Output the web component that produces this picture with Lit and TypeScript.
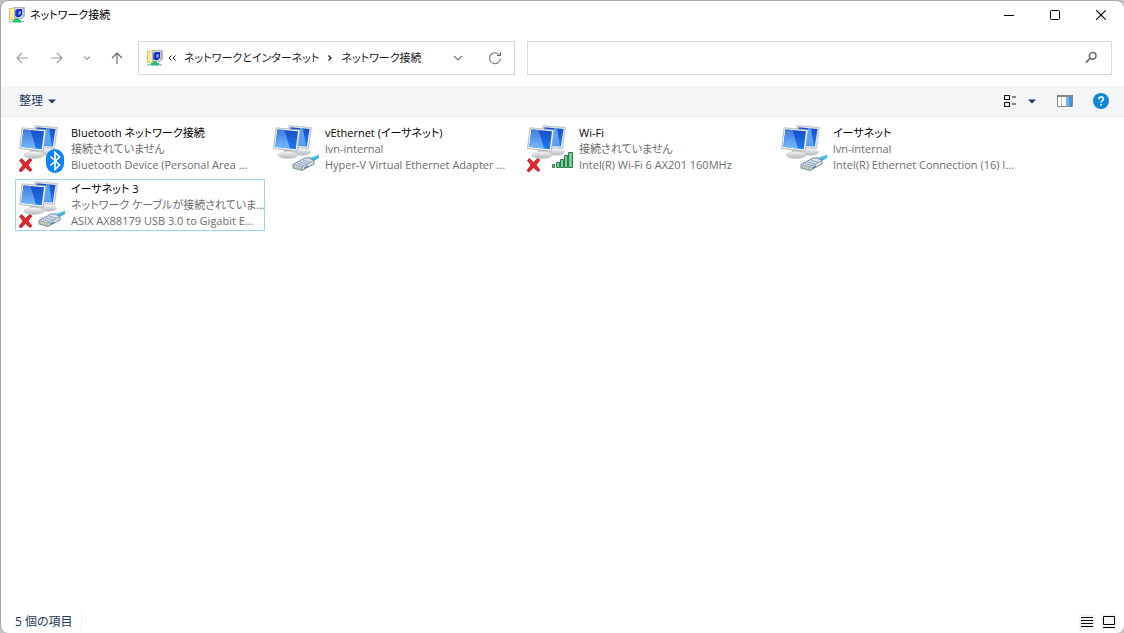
import { LitElement, html, css, svg, nothing } from "lit";
import { customElement, property, state } from "lit/decorators.js";
import { classMap } from "lit/directives/class-map.js";

type Badge = "bluetooth" | "cable" | "signal";

interface Connection {
  name: string;
  status: string;
  device: string;
  badge: Badge;
  disconnected: boolean;
}

const connections: Connection[] = [
  { name: "Bluetooth ネットワーク接続", status: "接続されていません", device: "Bluetooth Device (Personal Area ...", badge: "bluetooth", disconnected: true },
  { name: "vEthernet (イーサネット)", status: "lvn-internal", device: "Hyper-V Virtual Ethernet Adapter ...", badge: "cable", disconnected: false },
  { name: "Wi-Fi", status: "接続されていません", device: "Intel(R) Wi-Fi 6 AX201 160MHz", badge: "signal", disconnected: true },
  { name: "イーサネット", status: "lvn-internal", device: "Intel(R) Ethernet Connection (16) I...", badge: "cable", disconnected: false },
  { name: "イーサネット 3", status: "ネットワーク ケーブルが接続されていま...", device: "ASIX AX88179 USB 3.0 to Gigabit E...", badge: "cable", disconnected: true },
];

const controls = css`
  button {
    font: inherit;
    font-feature-settings: inherit;
    color: inherit;
    background: none;
    border: 0;
    margin: 0;
    padding: 0;
    display: flex;
    align-items: center;
    justify-content: center;
  }
  svg {
    display: block;
    flex: none;
  }
`;

const folderIcon = svg`<svg width="16" height="16" viewBox="0 0 16 16" aria-hidden="true">
  <path d="M.5 1.500h3l1-1h4v12h-8z" fill="#fbeb9c" stroke="#dcc25c"/>
  <path d="M5.500.8 15.600.3v8.700L13 11.700 5.500 11.300z" fill="#d3dae3" stroke="#97a3b2" stroke-width=".7"/>
  <path d="M13.500.8h2v8l-2 2z" fill="#aab6c4"/>
  <path d="M6 3.500 8.500 2.500v8L6 9z" fill="#4561c9"/>
  <path d="M7.500 2.200 13 2v5.500L11 10H7.500z" fill="#1524b4"/>
  <path d="M9 4.500 12 4v3L9.500 8.500z" fill="#6e9bfa"/>
  <path d="M6 11.500h4v1.500h2V15.600H4V13h2z" fill="#18c27b"/>
  <path d="M0 14h4v1.400H0zM12 14h3v1.400h-3z" fill="#b5babd"/>
</svg>`;

const badgeArt: Record<Badge, unknown> = {
  bluetooth: svg`
    <rect x="28" y="24" width="18" height="24" rx="9" fill="#0a84f7"/>
    <path d="m32.500 31.500 9 8.500-4.500 4.500v-17l4.500 4.500-9 8.500" fill="none" stroke="#fff" stroke-width="1.700"/>`,
  cable: svg`
    <path d="m37 33 10-3.500v3.500l-7 4z" fill="#3db4e6"/>
    <path d="m36 34 11-4.500" stroke="#b5e6f8" stroke-width="1.200"/>
    <path d="m21 39.500 12-6.500 4-.3 5 2.800v3.500l-12 6.500-9-2.500z" fill="#d5dfe8" stroke="#587590" stroke-width=".8"/>
    <path d="m21 39.500 9 2.500 12-6.500M30 42v3.500" fill="none" stroke="#6b8aa5" stroke-width=".7"/>
    <path d="m25 38.500 7 2M28 37l7 2M31 35.300l7 2" stroke="#7f9bb2" stroke-width=".8"/>
    <path d="M22.500 41v2m2-1.500v2m2-1.500v2m2-1.500v2" stroke="#b8a84e" stroke-width=".9"/>
    <path d="m32 42.500 4-2.200v1.700l-4 2z" fill="#647f9c"/>`,
  signal: svg`
    <g stroke="#2a7f48" stroke-width="1" fill="#7ccb98">
      <path d="M26.500 39.500h2v3h-2zM30.500 37.500h3v5h-3zM34.500 34.500h3v8h-3zM38.500 30.500h3v12h-3zM42.500 27.500h4v15h-4z"/>
    </g>`,
};

@customElement("connection-icon")
export class ConnectionIcon extends LitElement {
  @property() badge: Badge = "cable";
  @property({ type: Boolean }) disconnected = false;

  static styles = css`
    :host { display: block; flex: none; }
    svg { display: block; }
  `;

  render() {
    return html`<svg width="49" height="48" viewBox="0 0 49 48" aria-hidden="true">
      <defs>
        <linearGradient id="screen" x1="0" y1="0" x2="0" y2="1">
          <stop offset="0" stop-color="#1a4cc4"/><stop offset="1" stop-color="#1c7cf4"/>
        </linearGradient>
        <linearGradient id="shine" x1="0" y1="0" x2="0" y2="1">
          <stop offset="0" stop-color="#3f78dc"/><stop offset="1" stop-color="#74bbfc"/>
        </linearGradient>
        <linearGradient id="base" x1="0" y1="0" x2="0" y2="1">
          <stop offset="0" stop-color="#f5f6f7"/><stop offset="1" stop-color="#b2b6b9"/>
        </linearGradient>
      </defs>
      <ellipse cx="30" cy="27" rx="9" ry="3.500" fill="url(#base)"/>
      <path d="M17 .6 39.400 2.500 36.500 23.500 15 22z" fill="#e3e6e9" stroke="#aab0b5" stroke-width=".7"/>
      <path d="M18.500 2.200 37.500 3.900 34.800 21.500 17 20z" fill="url(#screen)"/>
      <path d="M28 3 31 3.300 34 21.200 26 20z" fill="#5ba2f6"/>
      <path d="m12 24 9 1v4h-9z" fill="#c0c4c7"/>
      <ellipse cx="16" cy="30" rx="10" ry="3.600" fill="url(#base)" stroke="#c4c8ca" stroke-width=".5"/>
      <path d="M4 2.800 28 5 25.300 26.300 1.500 23.500z" fill="#eceff1" stroke="#9fa7ae" stroke-width=".7"/>
      <path d="M5.500 4.500 26 6.300 23.700 24.300 3.300 21.800z" fill="url(#screen)"/>
      <path d="M5.500 4.500 12.500 5.100 18 23.600 3.300 21.800z" fill="url(#shine)"/>
      ${badgeArt[this.badge]}
      ${this.disconnected
        ? svg`<path d="M1.500 35.500 3.500 33.500 7.500 37.500 11.500 33.500 14 35 10 40 14 45 12 46.500 7.500 42.500 3 47 1 45.500 5 40z" fill="#e3262e" stroke="#b8121c" stroke-width=".7"/>`
        : nothing}
    </svg>`;
  }
}

@customElement("connection-tile")
export class ConnectionTile extends LitElement {
  @property({ attribute: false }) connection!: Connection;
  @property({ type: Boolean }) selected = false;

  static styles = [controls, css`
    :host { display: block; min-width: 0; }
    .tile {
      width: 100%;
      height: 52px;
      padding: 0 2px;
      border: 1px solid transparent;
      justify-content: flex-start;
      gap: 4px;
      text-align: left;
    }
    .tile.selected { border-color: #99d1ff; }
    .text { min-width: 0; line-height: 16px; color: #6d6d6d; }
    .line { display: block; white-space: nowrap; }
    .name { color: #000; }
  `];

  render() {
    const c = this.connection;
    return html`<button class=${classMap({ tile: true, selected: this.selected })}>
      <connection-icon .badge=${c.badge} ?disconnected=${c.disconnected}></connection-icon>
      <span class="text">
        <span class="line name">${c.name}</span>
        <span class="line">${c.status}</span>
        <span class="line">${c.device}</span>
      </span>
    </button>`;
  }
}

@customElement("app-root")
export class AppRoot extends LitElement {
  @state() private selected = 4;

  static styles = [controls, css`
    :host {
      display: block;
      height: 100vh;
      background: #c4c4c4;
      font-family: "Open Sans", "Noto Sans CJK JP", sans-serif;
      font-size: 11px;
      line-height: 16px;
      font-kerning: normal;
      font-feature-settings: "palt", "kern";
      color: #1a1a1a;
    }
    .window {
      box-sizing: border-box;
      height: 100%;
      display: flex;
      flex-direction: column;
      background: #fff;
      border: 1px solid #a8a8a8;
      border-right: 0;
      border-bottom: 0;
      border-radius: 8px;
      overflow: hidden;
    }
    .titlebar { display: flex; align-items: center; height: 28px; padding-left: 8px; }
    .title { flex: 1; margin: 0 0 0 5px; font-size: 11px; font-weight: 400; color: #000; }
    .caption { width: 46px; height: 28px; }
    .navbar { display: flex; align-items: center; height: 57px; padding: 0 12px 0 9px; }
    .arrows { display: flex; align-items: center; color: #9a9a9a; gap: 11px; margin-right: 9px; }
    .arrow { width: 24px; height: 24px; }
    .recent { width: 14px; height: 24px; }
    .up { color: #606060; }
    .address, .search {
      box-sizing: border-box;
      height: 34px;
      display: flex;
      align-items: center;
      border: 1px solid #d9d9d9;
      background: #fff;
      min-width: 0;
    }
    .address { flex: 19 1 0; padding: 0 6px 0 8px; margin-right: 12px; }
    .search { flex: 30 1 0; padding-right: 13px; }
    .crumbs { flex: 1; display: flex; align-items: center; gap: 8px; margin-left: 5px; white-space: nowrap; }
    .tool { width: 26px; height: 26px; color: #707070; }
    .address-tools { display: flex; gap: 11px; }
    .field { flex: 1; min-width: 0; height: 30px; border: 0; outline: 0; padding: 0 8px; font: inherit; background: none; }
    .toolbar {
      display: flex;
      align-items: center;
      justify-content: space-between;
      height: 30px;
      padding: 0 15px 0 18px;
      background: #f4f5f7;
      border-bottom: 1px solid #e8e9eb;
      font-size: 12px;
      color: #1e395b;
    }
    .organize { gap: 5px; }
    .views { display: flex; align-items: center; }
    .view { gap: 12px; margin-right: 21px; }
    .pane { margin-right: 20px; }
    .list {
      flex: 1;
      display: grid;
      grid-template-columns: repeat(auto-fill, 250px);
      align-content: start;
      gap: 4px;
      list-style: none;
      margin: 0;
      padding: 6px 14px;
    }
    .statusbar { display: flex; align-items: center; height: 22px; padding: 0 7px 0 14px; font-size: 12px; color: #1e395b; }
    .count { flex: 1; }
    .count span { padding-right: 8px; border-right: 1px solid #f0f0f0; }
    .mode { width: 16px; height: 16px; background: #f5f5f5; margin-left: 6px; }
  `];

  render() {
    const stroke = (size: number, d: string, width = 1.1) => svg`<svg width=${size} height=${size} viewBox=${`0 0 ${size} ${size}`} fill="none" stroke="currentColor" stroke-width=${width} aria-hidden="true"><path d=${d}/></svg>`;
    const caret = svg`<svg width="8" height="5" viewBox="0 0 8 5" aria-hidden="true"><path d="M0 .5h8L4 4.500z" fill="#1e395b"/></svg>`;
    return html`<div class="window">
      <header class="titlebar">
        ${folderIcon}
        <h1 class="title">ネットワーク接続</h1>
        <button class="caption" aria-label="最小化"><svg width="10" height="10" viewBox="0 0 10 10"><path d="M0 5.500h10" stroke="#000"/></svg></button>
        <button class="caption" aria-label="最大化"><svg width="10" height="10" viewBox="0 0 10 10"><rect x=".5" y=".5" width="9" height="9" rx="1" fill="none" stroke="#000"/></svg></button>
        <button class="caption" aria-label="閉じる"><svg width="10" height="10" viewBox="0 0 10 10"><path d="m0 0 10 10M10 0 0 10" stroke="#000" stroke-width="1.100"/></svg></button>
      </header>

      <nav class="navbar">
        <div class="arrows">
          <button class="arrow" aria-label="戻る">${stroke(12, "M12 6H1M6 1 1 6l5 5")}</button>
          <button class="arrow" aria-label="進む">${stroke(12, "M0 6h11M6 1l5 5-5 5")}</button>
          <button class="recent" aria-label="履歴">${stroke(8, "m1 2.500 3 3 3-3")}</button>
          <button class="arrow up" aria-label="上へ">${stroke(12, "M6 12V1M1 6l5-5 5 5")}</button>
        </div>
        <div class="address">
          ${folderIcon}
          <div class="crumbs">
            <button aria-label="上位の場所">${stroke(8, "M3.500 1.500 1 4l2.500 2.500M7.500 1.500 5 4l2.500 2.500", 1)}</button>
            <button>ネットワークとインターネット</button>
            ${stroke(6, "m1.500 .5 2.500 2.500-2.500 2.500", 1.2)}
            <button>ネットワーク接続</button>
          </div>
          <div class="address-tools">
            <button class="tool" aria-label="以前の場所">${stroke(10, "m1 3 4 4 4-4")}</button>
            <button class="tool" aria-label="更新">${stroke(14, "M12.500 7.500A5.500 5.500 0 1 1 11.500 4M12.500 1v3.500H9")}</button>
          </div>
        </div>
        <div class="search">
          <input class="field" type="search" aria-label="検索">
          ${svg`<svg width="13" height="13" viewBox="0 0 13 13" fill="none" stroke="#707070" aria-hidden="true"><circle cx="7.700" cy="4.800" r="3.300" stroke-width="1.600"/><path d="m5.300 7.200-4.300 4.300" stroke-width="1.800"/></svg>`}
        </div>
      </nav>

      <div class="toolbar">
        <button class="organize">整理 ${caret}</button>
        <div class="views">
          <button class="view" aria-label="表示方法">
            <svg width="12" height="12" viewBox="0 0 12 12" fill="none" stroke="#1a1a1a" stroke-width="1.200"><path d="M.5.5h5v4h-5zM.5 7.500h5v4h-5zM8 2h4M8 9h4"/></svg>
            ${caret}
          </button>
          <button class="pane" aria-label="プレビュー">
            <svg width="16" height="12" viewBox="0 0 16 12"><path d="M.5.5h15v11H.5z" fill="#fff" stroke="#878787"/><path d="M0 0h16v2H0z" fill="#878787"/><path d="M4.500 2v9" stroke="#c5c5c5"/><path d="M9 2h6v9H9z" fill="#3c98e4"/><path d="M9 2h3v9H9z" fill="#6cb7f2"/></svg>
          </button>
          <button aria-label="ヘルプ">
            <svg width="16" height="16" viewBox="0 0 16 16"><circle cx="8" cy="8" r="8" fill="#1287d8"/><path d="M5.700 6.200c0-3 4.700-3 4.700-.2 0 1.700-2.300 1.700-2.300 3.500" fill="none" stroke="#fff" stroke-width="1.600"/><circle cx="8.100" cy="11.700" r="1" fill="#fff"/></svg>
          </button>
        </div>
      </div>

      <ul class="list">
        ${connections.map((c, i) => html`<li>
          <connection-tile .connection=${c} ?selected=${this.selected === i} @click=${() => (this.selected = i)}></connection-tile>
        </li>`)}
      </ul>

      <footer class="statusbar">
        <div class="count"><span>5 個の項目</span></div>
        <button class="mode" aria-label="詳細"><svg width="12" height="10" viewBox="0 0 12 10"><path d="M0 .5h12M0 3.500h12M0 6.500h12M0 9.500h12" stroke="#000"/></svg></button>
        <button class="mode" aria-label="大アイコン"><svg width="12" height="12" viewBox="0 0 12 12"><path d="M.5.5h11v8H.5zM0 11.500h12" fill="none" stroke="#000"/></svg></button>
      </footer>
    </div>`;
  }
}
